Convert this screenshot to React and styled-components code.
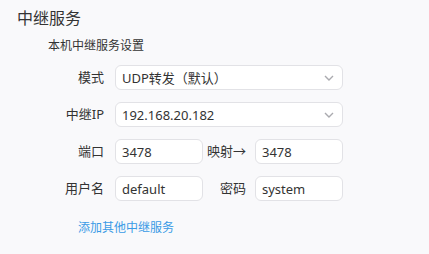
import React from "react";
import styled, { createGlobalStyle } from "styled-components";

const Global = createGlobalStyle`
  html, body { margin: 0; padding: 0; background: #f9f9fb; }
  body { font-family: "Noto Sans", "Noto Sans CJK SC", sans-serif; color: #333; }
`;

const Page = styled.div`
  width: 429px;
  height: 254px;
  box-sizing: border-box;
  padding: 7px 0 0 17px;
  display: flex;
  flex-direction: column;
`;

const Title = styled.div`
  font-size: 16px;
  line-height: 22px;
  color: #333;
`;

const Section = styled.div`
  margin-left: 31px;
  margin-top: 8px;
  display: flex;
  flex-direction: column;
`;

const Subtitle = styled.div`
  font-size: 12px;
  line-height: 18px;
  color: #333;
`;

const Form = styled.div`
  margin-top: 10px;
  display: grid;
  grid-template-columns: 56px 228px;
  column-gap: 11px;
  row-gap: 12px;
  align-items: center;
`;

const Label = styled.div`
  font-size: 13px;
  line-height: 25px;
  text-align: right;
  color: #333;
  white-space: nowrap;
`;

const Box = styled.div`
  height: 25px;
  box-sizing: border-box;
  background: #fff;
  border: 1px solid #e2e2e6;
  border-radius: 6px;
  display: flex;
  align-items: center;
  padding: 0 8px 0 6px;
  font-size: 13px;
  color: #333;
  justify-content: space-between;
`;

const Pair = styled.div`
  display: grid;
  grid-template-columns: 88px 52px 88px;
  align-items: center;
`;

const InnerLabel = styled(Label)`
  padding-right: 9px;
`;

const Link = styled.a`
  margin-top: 18px;
  margin-left: 30px;
  font-size: 12px;
  line-height: 17px;
  color: #3a9be6;
  text-decoration: none;
  cursor: pointer;
`;

const Chevron = () => (
  <svg width="10" height="6" viewBox="0 0 10 6">
    <path d="M1 1 L5 5 L9 1" fill="none" stroke="#aaaaaf" strokeWidth="1.4" />
  </svg>
);

export default function App() {
  return (
    <>
      <Global />
      <Page>
        <Title>中继服务</Title>
        <Section>
          <Subtitle>本机中继服务设置</Subtitle>
          <Form>
            <Label>模式</Label>
            <Box>
              <span>UDP转发（默认）</span>
              <Chevron />
            </Box>
            <Label>中继IP</Label>
            <Box>
              <span>192.168.20.182</span>
              <Chevron />
            </Box>
            <Label>端口</Label>
            <Pair>
              <Box>3478</Box>
              <InnerLabel>映射→</InnerLabel>
              <Box>3478</Box>
            </Pair>
            <Label>用户名</Label>
            <Pair>
              <Box>default</Box>
              <InnerLabel>密码</InnerLabel>
              <Box>system</Box>
            </Pair>
          </Form>
          <Link>添加其他中继服务</Link>
        </Section>
      </Page>
    </>
  );
}
